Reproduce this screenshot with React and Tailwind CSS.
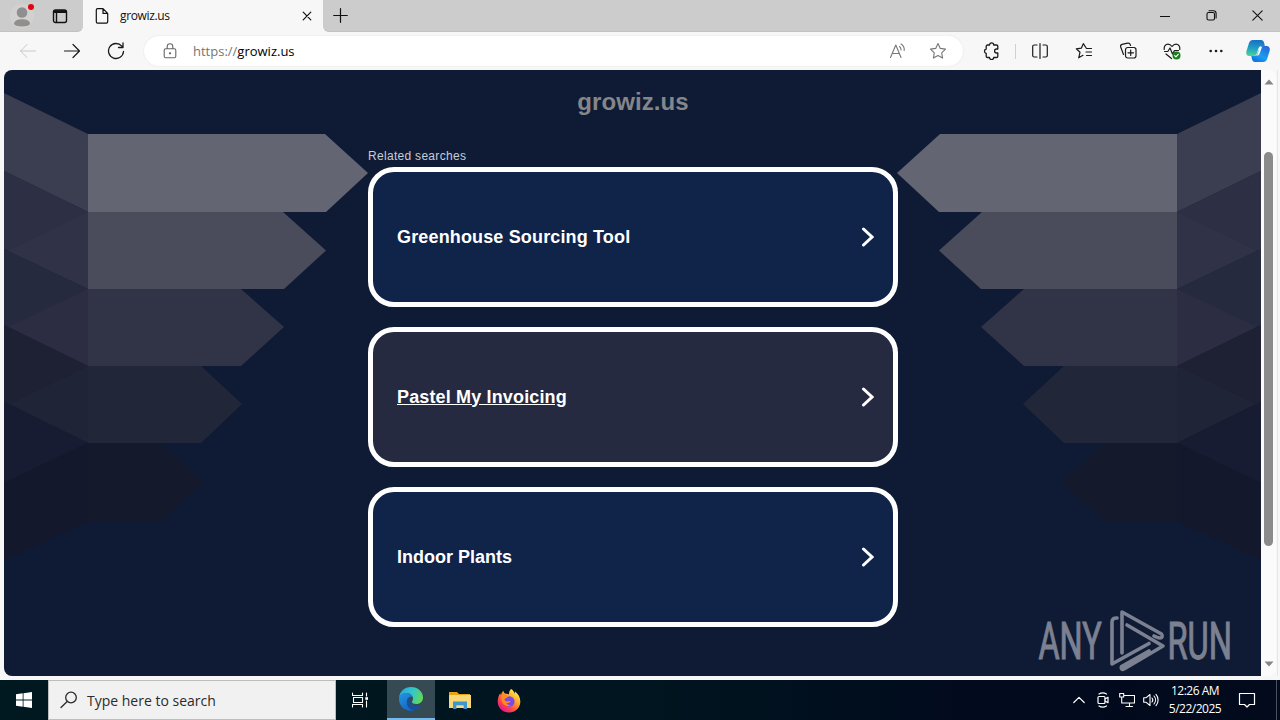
const results = [
  { label: "Greenhouse Sourcing Tool", spacing: "tracking-[0.15px]", hovered: false },
  { label: "Pastel My Invoicing", spacing: "tracking-[0.15px]", hovered: true },
  { label: "Indoor Plants", spacing: "tracking-normal", hovered: false },
];

function Icon({ size = 18, children, className = "", width = 1 }) {
  return (
    <svg
      width={size}
      height={size}
      viewBox={`0 0 ${size} ${size}`}
      fill="none"
      stroke="currentColor"
      strokeWidth={width}
      strokeLinecap="round"
      strokeLinejoin="round"
      className={`block shrink-0 ${className}`}
    >
      {children}
    </svg>
  );
}

function Cell({ className = "", children }) {
  return <div className={`flex h-full shrink-0 items-center justify-center ${className}`}>{children}</div>;
}

function TitleBar() {
  return (
    <div className="flex h-8 bg-[#f7f7f7] text-[#111]">
      <div className="flex w-[83px] rounded-br-md border-b border-[#c2c2c2] bg-[#cccccc]">
        <Cell className="w-11">
          <svg width="26" height="26" viewBox="0 0 26 26" className="block">
            <circle cx="13" cy="13" r="12" fill="#d3d1cf" />
            <circle cx="13" cy="9.500" r="5.300" fill="#8f8f8f" />
            <path d="M5 21c0-3.500 4-4.800 8-4.800s8 1.300 8 4.800c-1.500 1.800-4.500 2.500-8 2.500s-6.500-.7-8-2.500z" fill="#8f8f8f" />
            <circle cx="22" cy="4" r="3" fill="#e3000f" />
          </svg>
        </Cell>
        <Cell className="w-8">
          <Icon size={16} width={1.4}>
            <rect x="1.500" y="2" width="13" height="12.500" rx="2" />
            <path d="M2 4h12M2.500 3.200h11" strokeWidth="2" />
            <path d="M4.500 4.500v9.500" />
          </Icon>
        </Cell>
      </div>
      <div className="flex w-60 items-center pl-3">
        <svg width="14" height="16" viewBox="0 0 14 16" fill="none" stroke="currentColor" strokeWidth="1.2" strokeLinejoin="round">
          <path d="M1.300 2c0-.8.500-1.300 1.300-1.300H8l4.700 4.700v8.400c0 .8-.5 1.300-1.300 1.300H2.600c-.8 0-1.300-.5-1.300-1.300zM8 .7v4.700h4.700" />
        </svg>
        <span className="ml-[11px] font-['Open_Sans',sans-serif] text-[12px] leading-4 tracking-[-0.35px]">growiz.us</span>
        <Icon size={10} width={1.2} className="mr-[11px] ml-auto">
          <path d="M1.200 1.200l7.600 7.600M8.800 1.200l-7.600 7.600" />
        </Icon>
      </div>
      <div className="flex grow items-center rounded-bl-md border-b border-[#c2c2c2] bg-[#cccccc] pl-[10px]">
        <Icon size={15} width={1.2}>
          <path d="M7.500.7v13.600M.7 7.500h13.600" />
        </Icon>
        <div className="ml-auto flex h-full">
          <Cell className="w-[46px]">
            <Icon size={10}>
              <path d="M0 5.500h10" />
            </Icon>
          </Cell>
          <Cell className="w-[46px]">
            <Icon size={11} width={1.1}>
              <rect x="1" y="2.500" width="7.500" height="7.500" rx="1.500" />
              <path d="M3 .8h4.500c1.600 0 2.600 1 2.600 2.600V8" />
            </Icon>
          </Cell>
          <Cell className="w-[46px]">
            <Icon size={11} width={1.1}>
              <path d="M.8.8l9.400 9.400M10.200.8L.8 10.200" />
            </Icon>
          </Cell>
        </div>
      </div>
    </div>
  );
}

function Copilot() {
  return (
    <svg width="26" height="26" viewBox="0 0 26 26" className="block">
      <defs>
        <linearGradient id="cpA" x1="0.3" y1="0" x2="0.2" y2="1">
          <stop offset="0" stopColor="#1a6fc4" />
          <stop offset="0.5" stopColor="#1f9fc4" />
          <stop offset="1" stopColor="#4fd695" />
        </linearGradient>
        <linearGradient id="cpB" x1="0.8" y1="0" x2="0.2" y2="1">
          <stop offset="0" stopColor="#2568d8" />
          <stop offset="0.6" stopColor="#1d9df0" />
          <stop offset="1" stopColor="#0f6fe0" />
        </linearGradient>
      </defs>
      <path d="M8 2h8c2 0 2.800 1.500 3.300 3.500L19.800 8h-3c-2 0-3 1-3.600 3L12 15c-.6 2-1.600 3-3.500 3H4.500C2 18 .7 16 1.500 13L4 5c.7-2 2-3 4-3z" fill="url(#cpA)" />
      <path d="M18.500 8H21c3 0 4.500 2 3.600 5l-2.500 8c-.7 2-2 3-4 3h-8c-2 0-2.800-1.500-3.300-3.500L6.300 18H9c2 0 3-1 3.600-3l1.500-4c.6-2 1.600-3 4.400-3z" fill="url(#cpB)" />
      <path d="M14.500 9h2.500l-2.300 6.500c-.4 1.300-1 2-2.400 2h-1.800c1.500 0 2-.8 2.500-2.500z" fill="#f5fbff" />
    </svg>
  );
}

function Toolbar() {
  return (
    <div className="flex h-[38px] items-center bg-[#f7f7f7] pl-[6px] text-[#1b1b1b]">
      <Cell className="w-11 text-[#c9c9c9]">
        <Icon>
          <path d="M16.500 9h-15M8 2.500L1.500 9 8 15.500" />
        </Icon>
      </Cell>
      <Cell className="w-11">
        <Icon width={1.2}>
          <path d="M1.500 9h15M10 2.500L16.500 9 10 15.500" />
        </Icon>
      </Cell>
      <Cell className="w-11">
        <Icon width={1.3}>
          <path d="M16.500 9.500A7.500 7.500 0 1 1 14.800 4.200M16 1v4.500h-4.500" />
        </Icon>
      </Cell>
      <div className="ml-[6px] flex h-[30px] w-[819px] items-center rounded-full bg-white pr-4 pl-[18px] shadow-[0_0_2px_#e2e2e2]">
        <Icon size={16} width={1.1} className="text-[#666]">
          <rect x="2.200" y="5.800" width="11.600" height="9" rx="1.500" />
          <path d="M5.200 5.500V3.500a2.800 2.800 0 0 1 5.600 0v2" />
          <circle cx="8" cy="10.300" r=".6" fill="currentColor" />
        </Icon>
        <span className="ml-[15px] font-['Open_Sans',sans-serif] text-[13px] leading-5 text-[#767676]">
          https://<span className="text-black">growiz.us</span>
        </span>
        <Icon width={1.1} className="mr-[22px] ml-auto text-[#777]">
          <path d="M1.500 15.500L6.800 3l5.200 12.500M3.300 11.500h7M10.500 4.500c1.200.8 1.600 2 1.500 3.500M12 2c2.500 1.500 3.500 3.500 3.200 6.500" />
        </Icon>
        <Icon width={1.1} className="text-[#777]">
          <path d="M9 1.500l2.300 4.900 5.200.7-3.800 3.700.9 5.300L9 13.600l-4.600 2.500.9-5.300L1.500 7.100l5.200-.7z" />
        </Icon>
      </div>
      <Cell className="ml-[7px] w-11">
        <Icon width={1.3}>
          <path d="M4.500 3H6.500a2.100 2.100 0 0 1 4.200 0h2.800a1.300 1.300 0 0 1 1.300 1.300V7h-1.200a2 2 0 0 0 0 4h1.200v3.200a1.300 1.300 0 0 1-1.300 1.300h-2.800a2.100 2.100 0 0 1-4.200 0H4.500a1.300 1.300 0 0 1-1.300-1.300v-2.900a2.200 2.200 0 0 1 0-4.300V4.300A1.300 1.300 0 0 1 4.500 3z" />
        </Icon>
      </Cell>
      <div className="mr-[2px] ml-px h-[15px] w-px bg-[#d0d0d0]" />
      <Cell className="w-11">
        <Icon width={1.2}>
          <path d="M6 3H3.200a1.500 1.500 0 0 0-1.500 1.500v9A1.500 1.500 0 0 0 3.200 15H6M12 3h2.800a1.500 1.500 0 0 1 1.500 1.500v9a1.500 1.500 0 0 1-1.500 1.500H12M9 1.500v15" />
        </Icon>
      </Cell>
      <Cell className="w-11">
        <Icon width={1.2}>
          <path d="M16.500 6.500h-5L8.300 1.700 6.300 6.200l-5 .6L5 10.300l-1.300 5.500 4.300-2.500M11 10h5.500M11.500 13.500h5" />
        </Icon>
      </Cell>
      <Cell className="w-11">
        <Icon width={1.2}>
          <rect x="6.500" y="5.500" width="10.500" height="10.500" rx="2.200" />
          <path d="M11.700 8v5.500M9 10.800h5.500M4.500 12.500L1.700 5c-.4-1.300.2-2.200 1.300-2.600l5.700-1.200c1.300-.3 2.200.3 2.600 1.500l.3.800" />
        </Icon>
      </Cell>
      <Cell className="w-11">
        <Icon width={1.2}>
          <path d="M1.200 7.500c-.4-3 1.300-5.300 3.800-5.300 2 0 3 1 4 2.300 1-1.300 2-2.300 4-2.300 2.500 0 4.200 2.300 3.800 5.300M1.500 9.500h3.300L7 6l2.500 6 2-3.500h4M3 12l5.500 4.500" />
          <circle cx="13.500" cy="13.500" r="4" fill="#16801a" stroke="none" />
          <path d="M11.700 13.600l1.200 1.200 2.300-2.500" stroke="#fff" />
        </Icon>
      </Cell>
      <Cell className="w-11">
        <svg width="14" height="4" viewBox="0 0 14 4" fill="currentColor">
          <circle cx="1.700" cy="2" r="1.300" />
          <circle cx="7" cy="2" r="1.300" />
          <circle cx="12.300" cy="2" r="1.300" />
        </svg>
      </Cell>
      <Cell className="w-10">
        <Copilot />
      </Cell>
    </div>
  );
}

function Ribbons() {
  return (
    <g>
      <path d="M0 91L88 134V212L0 169z" fill="#3b3d50" />
      <path d="M0 169L88 212V289L0 247z" fill="#2d3044" />
      <path d="M88 212V289L8 251z" fill="#303347" />
      <path d="M0 247L88 289V366L0 323z" fill="#262a3e" />
      <path d="M88 289V366L8 327z" fill="#2c2d42" />
      <path d="M0 323L88 366V443L0 400z" fill="#1e2033" />
      <path d="M88 366V443L10 404z" fill="#202437" />
      <path d="M0 400L88 443L0 485z" fill="#181c32" />
      <path d="M0 485L88 443V521L0 562z" fill="#14182c" />
      <path d="M88 134H325L368 173L326 212H88z" fill="#636573" />
      <path d="M88 212H283L326 250.500L284 289H88z" fill="#4a4c5c" />
      <path d="M88 289H241L284 327L241 366H88z" fill="#313347" />
      <path d="M88 366H201L242 404L201 443H88z" fill="#212638" />
      <path d="M88 443H160L204 482L160 521H88z" fill="#14192c" />
    </g>
  );
}

function Backdrop() {
  return (
    <svg width="1257" height="606" viewBox="4 70 1257 606" className="absolute inset-0 block">
      <Ribbons />
      <g transform="translate(1265 0) scale(-1 1)">
        <Ribbons />
      </g>
    </svg>
  );
}

function ResultCard({ label, spacing, hovered }) {
  return (
    <a
      className={`flex h-[140px] items-center justify-between rounded-[26px] border-[5px] border-white pr-[19px] pl-6 ${
        hovered ? "bg-[#262a41]" : "bg-[#10244a]"
      }`}
    >
      <span className={`text-[18px] font-bold text-white ${spacing} ${hovered ? "underline" : ""}`}>{label}</span>
      <svg width="13" height="20" viewBox="0 0 13 20" fill="none" stroke="#fff" strokeWidth="3" strokeLinecap="round" className="block">
        <path d="M2.500 2L11 10L2.500 18" />
      </svg>
    </a>
  );
}

function Watermark() {
  return (
    <svg
      width="200"
      height="64"
      viewBox="1036 609 200 64"
      className="absolute right-[25px] bottom-[3px] block overflow-visible opacity-60"
      fill="#c3c5cf"
      fontFamily="Roboto, sans-serif"
      fontSize="51"
    >
      <g stroke="#c3c5cf" strokeWidth="1">
        <text transform="translate(1038.500 659) scale(0.635 1)">ANY</text>
        <text transform="translate(1167.500 659) scale(0.64 1)">RUN</text>
      </g>
      <path
        d="M1117 618c-3-.3-5 1-5 4V664L1149 643.500M1122 653V612L1161.500 634c1.500 2 .5 4-1.500 4-2 0-4-1-6-2M1127 625L1163 646L1124 669c-2 1-3.500-.5-2.500-2.500L1149 651"
        fill="none"
        stroke="#c3c5cf"
        strokeWidth="3.600"
        strokeLinecap="round"
        strokeLinejoin="round"
      />
    </svg>
  );
}

function ScrollBar() {
  return (
    <div className="flex w-[15px] flex-col items-center rounded-r-lg bg-[#fbfbfb] pt-[9px] pb-[9px]">
      <svg width="10" height="6" viewBox="0 0 10 6" fill="#858585">
        <path d="M5 .5L9.500 5.500H.5z" />
      </svg>
      <div className="mt-[67px] h-[394px] w-[9px] rounded-full bg-[#8b8b8b]" />
      <svg width="10" height="6" viewBox="0 0 10 6" fill="#858585" className="mt-auto">
        <path d="M5 5.500L9.500.5H.5z" />
      </svg>
    </div>
  );
}

function WebPage() {
  return (
    <div className="flex h-[610px] bg-[#f7f7f7] pb-1 pl-1">
      <div className="relative w-[1257px] overflow-hidden rounded-l-lg bg-[#0f1b35]">
        <Backdrop />
        <div className="relative ml-[364px] w-[530px] font-['Liberation_Sans',Arial,sans-serif]">
          <h1 className="pt-[18px] text-center text-[24px] leading-7 font-bold tracking-[0.1px] text-[#848689]">growiz.us</h1>
          <p className="mt-[31px] h-5 text-[12px] leading-[18px] tracking-[0.3px] text-[#c9ccd6]">Related searches</p>
          <div className="flex flex-col gap-5">
            {results.map((r) => (
              <ResultCard key={r.label} {...r} />
            ))}
          </div>
        </div>
        <Watermark />
      </div>
      <ScrollBar />
      <div className="ml-px w-px bg-[#e6e6e6]" />
    </div>
  );
}

function EdgeLogo() {
  return (
    <svg width="26" height="26" viewBox="0 0 26 26" className="block">
      <defs>
        <linearGradient id="edgeTop" x1="0" y1="0.3" x2="1" y2="0.6">
          <stop offset="0" stopColor="#2ba7e0" />
          <stop offset="0.5" stopColor="#33c6c9" />
          <stop offset="1" stopColor="#62d957" />
        </linearGradient>
        <linearGradient id="edgeLow" x1="0" y1="0" x2="0.6" y2="1">
          <stop offset="0" stopColor="#2396e3" />
          <stop offset="1" stopColor="#1565c0" />
        </linearGradient>
      </defs>
      <path d="M1 12C1.500 5.500 6.500 1 13 1c7 0 12 5 12 10.500 0 4-3 6.500-6.500 6.500-3 0-4.500-1-4.500-2s1-1.500 1-3.500C15 9.500 12 7 8.500 7 4.500 7 2 9.500 1 12z" fill="url(#edgeTop)" />
      <path d="M1 13c0-3.500 3-6 7.500-6 3 0 5.500 1.600 6.300 4-3-1-6 1.500-6 5 0 4 3.200 8 8 8.300-1.200.5-2.500.7-3.800.7C6.500 25 1 20 1 13z" fill="url(#edgeLow)" />
      <path d="M9 15.500c0-2.500 1.700-4.500 4-5-.8 1-1.200 2-1.200 3.500 0 4 4 6 7.500 6 1.800 0 3-.5 4-1.200C21.500 22 19 24.200 16 24.300c-4.500-.7-7-4.300-7-8.800z" fill="#174f9c" />
    </svg>
  );
}

function FirefoxLogo() {
  return (
    <svg width="24" height="25" viewBox="0 0 24 25" className="block">
      <defs>
        <linearGradient id="fox" x1="0.85" y1="0.1" x2="0.2" y2="0.95">
          <stop offset="0" stopColor="#fff14a" />
          <stop offset="0.4" stopColor="#ff9a2b" />
          <stop offset="0.7" stopColor="#ff4450" />
          <stop offset="1" stopColor="#e31587" />
        </linearGradient>
      </defs>
      <path d="M14 1c2 1 3 2.500 3.500 4.500C18 5 18 4 17.800 3.300 21.500 6 23.500 10 23.300 14c-.3 6-5 10.500-11.300 10.500S.7 20 .7 13.500C.7 10 2 7 3.200 5.200c.2.800.4 1.300.8 1.800C4.500 5 5.300 3.700 6.500 2.700c0 1.500.8 2.600 2.200 3.100 1.600-.2 2.500.1 3.300.6C12 4 12.500 2.500 14 1z" fill="url(#fox)" />
      <circle cx="12.300" cy="13.500" r="5.300" fill="#7a4be0" />
      <path d="M4.500 7.500c2.500-1.200 5-.8 7 .8-1.500 1.700-2.800 2-4 2.500-.5 1 .5 2.200 1.800 2.500 1.800.4 2.800-.8 4.200 0-.8 1.600-2.500 2.200-4.500 1.800 1 1.500 3 2.500 5 2-3 2.500-8 .5-9.200-3.500-.6-2.300-.5-4-.3-6.100z" fill="#ff8a25" />
    </svg>
  );
}

function ExplorerLogo() {
  return (
    <svg width="22" height="19" viewBox="0 0 22 19" className="block">
      <path d="M0 1h8l2 2h11v4H0z" fill="#e8a317" />
      <path d="M0 4h22v13H0z" fill="#f8d775" />
      <path d="M4 10.500h14V18h-3.500v-3.500h-7V18H4z" fill="#3f94cc" />
      <path d="M7.500 14.500h7V17h-7z" fill="#f5d98b" />
    </svg>
  );
}

function TaskBar() {
  return (
    <div className="flex h-10 bg-[linear-gradient(90deg,#001820_0%,#00151f_50%,#010b1d_75%,#020a1c_100%)] font-['Open_Sans',sans-serif] text-white">
      <Cell className="w-12">
        <svg width="16" height="16" viewBox="0 0 16 16" fill="#fff">
          <path d="M0 2.200L6.700 1.300V7.600H0zM7.500 1.200L16 0V7.600H7.500zM0 8.400H6.700V14.700L0 13.800zM7.500 8.400H16V16L7.500 14.800z" />
        </svg>
      </Cell>
      <div className="flex w-72 items-center border border-[#bdbdbd] bg-[#f1f1f1] pl-[11px] text-[#2b2b2b]">
        <Icon width={1.3}>
          <circle cx="11" cy="6.500" r="5.300" />
          <path d="M7.200 10.500L1 16.500" />
        </Icon>
        <span className="ml-[9px] text-[14px]">Type here to search</span>
      </div>
      <Cell className="w-12">
        <Icon size={16} width={1.1}>
          <path d="M.5 1v2.500h10V1M.5 15v-2.500h10V15M1.500 5.500h9v5h-9zM14.500 1v3M14.500 9v6" />
          <path d="M13.300 5.200h2.700v2.600h-2.700z" fill="currentColor" stroke="none" />
        </Icon>
      </Cell>
      <Cell className="ml-[3px] w-12 border-b-2 border-[#76b9ed] bg-[#364a53]">
        <EdgeLogo />
      </Cell>
      <Cell className="ml-px w-12">
        <ExplorerLogo />
      </Cell>
      <Cell className="ml-px w-12">
        <FirefoxLogo />
      </Cell>
      <div className="ml-auto flex">
        <Cell className="w-6">
          <Icon size={12} width={1.2}>
            <path d="M.8 8.500L6 3.300l5.200 5.200" />
          </Icon>
        </Cell>
        <Cell className="w-6">
          <Icon size={16} width={1.2}>
            <rect x="3" y="4.500" width="7" height="7" rx="1" />
            <path d="M10 7l3-1.700v5.400L10 9M4 2c2.200-1.400 5.300-1.400 7.500 0M4 14c2.200 1.400 5.300 1.400 7.500 0" />
          </Icon>
        </Cell>
        <Cell className="w-6">
          <Icon size={16} width={1.1}>
            <path d="M5.500 3.500h10v7.500h-10M10.500 11v3.500M7 14.500h6.500M.7 1.500h4v3.500h-4zM2.700 5v6h4" />
          </Icon>
        </Cell>
        <Cell className="w-6">
          <Icon size={16} width={1.1}>
            <path d="M.7 5.700h2.500L7 2.500v11L3.200 10.300H.7zM9 6c1 1.200 1 2.800 0 4M11 4c2 2.300 2 5.700 0 8M13 2.300c2.800 3.300 2.800 8 0 11.400" />
          </Icon>
        </Cell>
        <div className="flex w-16 flex-col items-center justify-center text-[12px] leading-[18px] tracking-[-0.5px]">
          <span>12:26 AM</span>
          <span>5/22/2025</span>
        </div>
        <Cell className="w-10">
          <Icon size={18} width={1.2}>
            <path d="M1.500 2.500h15v11h-5L9 16l-2.500-2.500h-5z" />
          </Icon>
        </Cell>
        <div className="mr-[3px] ml-[9px] w-px bg-[#4b5361]" />
      </div>
    </div>
  );
}

export default function App() {
  return (
    <main className="flex h-[720px] w-[1280px] flex-col overflow-hidden bg-[#f7f7f7]">
      <TitleBar />
      <Toolbar />
      <WebPage />
      <TaskBar />
    </main>
  );
}
